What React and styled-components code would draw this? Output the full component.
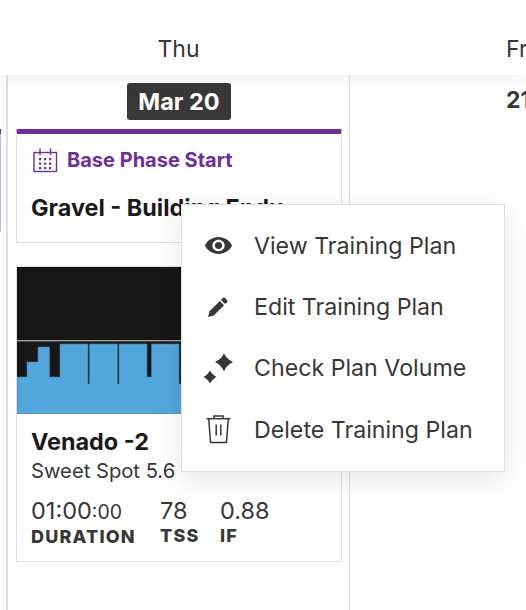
import React from "react";
import styled, { createGlobalStyle } from "styled-components";

const GlobalStyle = createGlobalStyle`
  html, body { margin: 0; padding: 0; background: #fff; }
  body { font-family: Inter, "Open Sans", sans-serif; color: #373737; }
`;

const menuItems = [
  { label: "View Training Plan", icon: <EyeIcon /> },
  { label: "Edit Training Plan", icon: <PencilIcon /> },
  { label: "Check Plan Volume", icon: <SparkIcon /> },
  { label: "Delete Training Plan", icon: <TrashIcon /> },
];

const stats = [
  { value: "01:00", small: ":00", label: "DURATION", width: 129 },
  { value: "78", label: "TSS", width: 60 },
  { value: "0.88", label: "IF", width: 60 },
];

// blue steps of the workout graph: [x, top] pairs, drawn left to right
const steps = [
  [10, 95], [21, 80], [32.5, 110], [43, 77], [71, 117], [72.5, 77],
  [100.5, 117], [102, 77], [130, 110], [134.5, 77], [162, 117], [164, 77],
  [192, 117], [194, 77], [222, 110], [226, 77], [254, 117], [256, 77], [284, 117], [286, 77],
];

function graphPath() {
  let d = "M0 147 V110";
  steps.forEach(([x, top]) => {
    d += ` H${x} V${top}`;
  });
  return d + " H326 V147 Z";
}

function EyeIcon() {
  return (
    <svg width="27" height="17" viewBox="1 4.5 22 15" preserveAspectRatio="none" fill="#373737">
      <path d="M12 4.5C7 4.5 2.73 7.61 1 12c1.73 4.39 6 7.5 11 7.5s9.27-3.11 11-7.5c-1.73-4.39-6-7.5-11-7.5zM12 17c-2.76 0-5-2.24-5-5s2.24-5 5-5 5 2.24 5 5-2.24 5-5 5zm0-8c-1.66 0-3 1.34-3 3s1.34 3 3 3 3-1.34 3-3-1.34-3-3-3z" />
    </svg>
  );
}

function PencilIcon() {
  return (
    <svg width="20" height="20" viewBox="0 0 20 20" fill="#373737">
      <path d="M0 20 L1.6 14.2 L11.8 4 L16 8.2 L5.8 18.4 Z" />
      <path d="M12.9 2.9 L15 0.8 C15.5 0.3 16.2 0.3 16.7 0.8 L19.2 3.3 C19.7 3.8 19.7 4.5 19.2 5 L17.1 7.1 Z" />
    </svg>
  );
}

function SparkIcon() {
  return (
    <svg width="30" height="30" viewBox="-1 0 30 30" fill="#373737">
      <path d="M20 0 C21 3 23.5 6 29 9 C25 11 21.5 14 20 18.5 C18.5 14 15 11 11 9 C16 6.5 19 3.5 20 0 Z" />
      <path d="M6 17.5 C7 19.5 8.5 21.5 12.5 24 C9.5 25.5 7 28 6 30.5 C5 28 2.5 25.5 -0.5 24 C3 22 5 19.5 6 17.5 Z" />
    </svg>
  );
}

function TrashIcon() {
  return (
    <svg width="25" height="29" viewBox="0 0 25 29" fill="none" stroke="#373737" strokeWidth="1.5">
      <path d="M0.5 3.7 H24.5" />
      <path d="M8 3.5 V1 H17 V3.5" />
      <path d="M2.7 4 L4.6 27.5 H20.4 L22.3 4" />
      <path d="M10.2 9.5 V20.5 M14.8 9.5 V20.5" />
    </svg>
  );
}

function CalendarIcon() {
  return (
    <svg width="25" height="25" viewBox="0 0 25 25" fill="none" stroke="#6f2c9b" strokeWidth="1.4">
      <rect x="1" y="4.5" width="22.5" height="19" />
      <path d="M7 0.5 V7 M17.5 0.5 V7" />
      <path
        fill="#6f2c9b"
        stroke="none"
        d="M6 10h2.2v2.2H6z M11 10h2.2v2.2H11z M16 10h2.2v2.2H16z M6 14.5h2.2v2.2H6z M11 14.5h2.2v2.2H11z M16 14.5h2.2v2.2H16z M6 19h2.2v2.2H6z M11 19h2.2v2.2H11z M16 19h2.2v2.2H16z"
      />
    </svg>
  );
}

const App = () => {
  return (
    <Page>
      <GlobalStyle />
      <Header>
        <DayName $width={349}>Thu</DayName>
        <DayName $width={177} $left>Fri</DayName>
      </Header>
      <Body>
        <PrevColumn>
          <PrevCard />
        </PrevColumn>
        <Column>
          <DateBadge>Mar 20</DateBadge>
          <PhaseCard>
            <PhaseTitle>
              <CalendarIcon />
              Base Phase Start
            </PhaseTitle>
            <PlanName>Gravel - Building Endu</PlanName>
          </PhaseCard>
          <WorkoutCard>
            <Graph>
              <svg width="326" height="147" viewBox="0 0 326 147">
                <rect width="326" height="147" fill="#171717" />
                <path d={graphPath()} fill="#52a6dc" stroke="#3f7fa9" strokeWidth="0.6" />
                <rect y="73" width="326" height="1.4" fill="#9c9c9c" />
              </svg>
            </Graph>
            <WorkoutBody>
              <WorkoutName>Venado -2</WorkoutName>
              <WorkoutType>Sweet Spot 5.6</WorkoutType>
              <Stats>
                {stats.map((s) => (
                  <Stat key={s.label} $width={s.width}>
                    <StatValue>
                      {s.value}
                      {s.small && <small>{s.small}</small>}
                    </StatValue>
                    <StatLabel>{s.label}</StatLabel>
                  </Stat>
                ))}
              </Stats>
            </WorkoutBody>
          </WorkoutCard>
        </Column>
        <NextColumn>
          <NextDate>21</NextDate>
        </NextColumn>
      </Body>
      <Menu>
        {menuItems.map((item) => (
          <MenuRow key={item.label}>
            <MenuIcon>{item.icon}</MenuIcon>
            {item.label}
          </MenuRow>
        ))}
      </Menu>
    </Page>
  );
};

export default App;

const Page = styled.div`
  position: relative;
  width: 526px;
  height: 610px;
  overflow: hidden;
  background: #fff;
`;

const Header = styled.div`
  position: relative;
  z-index: 2;
  display: flex;
  height: 75px;
  background: #fff;
  box-shadow: 0 3px 18px rgba(30, 40, 60, 0.09);
`;

const DayName = styled.div`
  flex: none;
  box-sizing: border-box;
  width: ${(p) => p.$width}px;
  padding-top: 35px;
  padding-left: ${(p) => (p.$left ? "157px" : "8px")};
  text-align: ${(p) => (p.$left ? "left" : "center")};
  font-size: 23px;
  line-height: 28px;
  color: #373737;
  white-space: nowrap;
`;

const Body = styled.div`
  display: flex;
  height: 535px;
`;

const PrevColumn = styled.div`
  flex: none;
  box-sizing: border-box;
  width: 8px;
  padding-top: 54px;
  border-right: 2px solid #e0e0e0;
`;

const PrevCard = styled.div`
  width: 1px;
  height: 98px;
  border-top: 5px solid #6f2c9b;
  background: #cbb8d8;
`;

const Column = styled.div`
  flex: none;
  box-sizing: border-box;
  width: 342px;
  padding: 8px 7px 0 8px;
  display: flex;
  flex-direction: column;
  align-items: stretch;
  border-right: 1px solid #dcdcdc;
`;

const DateBadge = styled.div`
  align-self: center;
  box-sizing: border-box;
  width: 104px;
  height: 37px;
  margin-bottom: 9px;
  border-radius: 3px;
  background: #383838;
  color: #fff;
  font-size: 23.5px;
  font-weight: 700;
  line-height: 37px;
  text-align: center;
  white-space: nowrap;
`;

const PhaseCard = styled.div`
  box-sizing: border-box;
  height: 114px;
  margin-bottom: 23px;
  padding: 14px 14px 0 14px;
  border: 1px solid #e0e0e0;
  border-top: 5px solid #6f2c9b;
  border-radius: 2px 2px 0 0;
`;

const PhaseTitle = styled.div`
  display: flex;
  align-items: center;
  gap: 9px;
  margin-left: 2px;
  color: #6f2c9b;
  font-size: 20px;
  font-weight: 700;
  line-height: 25px;
  white-space: nowrap;
`;

const PlanName = styled.div`
  margin-top: 21px;
  color: #1a1a1a;
  font-size: 23.4px;
  font-weight: 700;
  line-height: 28px;
  white-space: nowrap;
`;

const WorkoutCard = styled.div`
  box-sizing: border-box;
  height: 296px;
  border: 1px solid #e0e0e0;
`;

const Graph = styled.div`
  height: 147px;
  overflow: hidden;
  svg {
    display: block;
  }
`;

const WorkoutBody = styled.div`
  padding: 14px 14px 0 14px;
`;

const WorkoutName = styled.div`
  color: #1a1a1a;
  font-size: 23.4px;
  font-weight: 700;
  line-height: 28px;
`;

const WorkoutType = styled.div`
  margin-top: 2px;
  font-size: 20.2px;
  line-height: 25px;
  color: #373737;
`;

const Stats = styled.div`
  display: flex;
  margin-top: 14px;
`;

const Stat = styled.div`
  flex: none;
  width: ${(p) => p.$width}px;
`;

const StatValue = styled.div`
  font-size: 23.5px;
  line-height: 28px;
  color: #373737;
  small {
    font-size: 19.5px;
  }
`;

const StatLabel = styled.div`
  margin-top: 0;
  font-size: 18px;
  font-weight: 800;
  line-height: 22px;
  letter-spacing: 1.2px;
  color: #373737;
`;

const Menu = styled.div`
  position: absolute;
  z-index: 3;
  left: 181px;
  top: 204px;
  box-sizing: border-box;
  width: 324px;
  height: 268px;
  padding-top: 10px;
  background: #fff;
  border: 1px solid #e0e0e0;
  box-shadow: 0 8px 28px rgba(0, 0, 0, 0.1);
`;

const MenuRow = styled.div`
  display: flex;
  align-items: center;
  height: 61.3px;
  padding-left: 18px;
  font-size: 23.2px;
  color: #373737;
  white-space: nowrap;
`;

const MenuIcon = styled.span`
  flex: none;
  display: flex;
  align-items: center;
  justify-content: center;
  width: 36px;
  margin-right: 18px;
  svg {
    display: block;
    overflow: visible;
  }
`;

const NextColumn = styled.div`
  flex: 1;
  padding: 11px 0 0 156px;
`;

const NextDate = styled.div`
  font-size: 23px;
  font-weight: 700;
  line-height: 28px;
  color: #373737;
`;
